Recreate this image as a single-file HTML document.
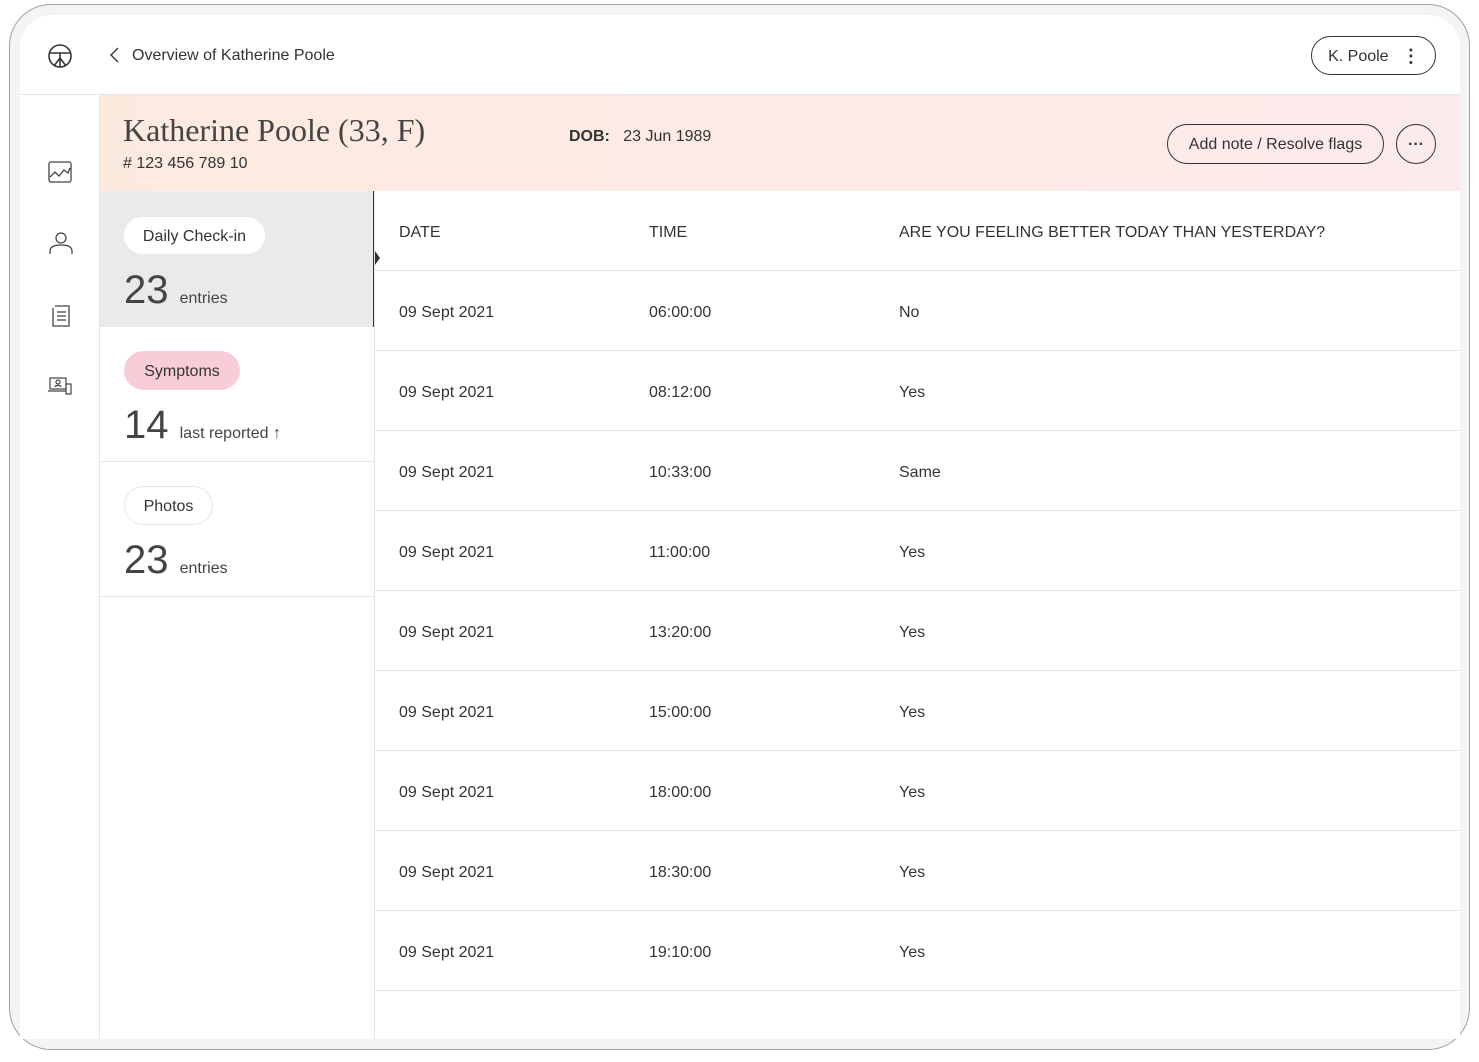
<!DOCTYPE html>
<html><head><style>
*{box-sizing:border-box;margin:0;padding:0}
body{width:1479px;height:1062px;background:#fff;font-family:"Liberation Sans",sans-serif;color:#333;position:relative;overflow:hidden}
.frame{position:absolute;left:9px;top:4px;width:1461px;height:1046px;border:1px solid #a0a0a0;border-radius:42px;background:#f4f4f4}
.screen{position:absolute;left:20px;top:15px;width:1440px;height:1024px;background:#fff;border-radius:32px 32px 0 0;overflow:hidden}
.abs{position:absolute}
.top{left:0;top:0;width:1440px;height:80px;border-bottom:1px solid #e6e6e6}
.side{left:0;top:80px;width:80px;height:944px;border-right:1px solid #e6e6e6}
.hdr{left:80px;top:80px;width:1360px;height:96px;background:linear-gradient(90deg,#fdeadf,#fcebeb)}
.pill{position:absolute;border-radius:20px;font-size:16px;display:flex;align-items:center;justify-content:center;padding-top:2px}
.row{position:absolute;left:355px;width:1085px;height:80px;border-bottom:1px solid #e6e6e6;font-size:16px}
.row span{position:absolute;top:33px}
.num{font-size:40px;color:#444}
</style></head><body>
<div class="frame"></div>
<div class="screen">
<div class="abs top">
 <svg class="abs" style="left:27px;top:28px" width="26" height="26" viewBox="0 0 26 26" fill="none" stroke="#333" stroke-width="1.6"><circle cx="13" cy="13" r="11"/><path d="M3 10h20M13 10v5M13 15l-6 8M13 15l6 8M13 15v9"/></svg>
 <svg class="abs" style="left:89px;top:31px" width="12" height="18" viewBox="0 0 12 18" fill="none" stroke="#333" stroke-width="1.4"><path d="M9 2L2 9l7 7"/></svg>
 <div class="abs" style="left:112px;top:32px;font-size:16px">Overview of Katherine Poole</div>
 <div class="pill" style="left:1291px;top:21px;width:125px;height:39px;border:1px solid #333">K. Poole&nbsp;&nbsp;&nbsp;<b style="font-size:18px;letter-spacing:-1px">⋮</b></div>
</div>
<div class="abs side">
 <svg class="abs" style="left:28px;top:66px" width="24" height="22" viewBox="0 0 24 22" fill="none" stroke="#444" stroke-width="1.3"><rect x="1" y="1" width="22" height="20" rx="2"/><path d="M2 16l5-5 4 4 5-6 4 3 2-5"/></svg>
 <svg class="abs" style="left:29px;top:136px" width="24" height="24" viewBox="0 0 24 24" fill="none" stroke="#444" stroke-width="1.3"><circle cx="12" cy="7" r="5"/><path d="M1 23v-3c0-4 4-6 11-6s11 2 11 6v3"/></svg>
 <svg class="abs" style="left:32px;top:210px" width="18" height="22" viewBox="0 0 18 22" fill="none" stroke="#444" stroke-width="1.3"><path d="M3 1h14v20H1V3"/><path d="M5 7h9M5 11h9M5 15h9"/></svg>
 <svg class="abs" style="left:28px;top:282px" width="24" height="18" viewBox="0 0 24 18" fill="none" stroke="#444" stroke-width="1.2"><rect x="2" y="1" width="16" height="11"/><path d="M0 14h18"/><circle cx="10" cy="5" r="2"/><path d="M7 10c0-2 6-2 6 0"/><rect x="18" y="7" width="5" height="10"/></svg>
</div>
<div class="abs hdr">
 <div class="abs" style="left:23px;top:17px;font-family:'Liberation Serif',serif;font-size:32px;color:#444">Katherine Poole (33, F)</div>
 <div class="abs" style="left:23px;top:60px;font-size:16px"># 123 456 789 10</div>
 <div class="abs" style="left:469px;top:33px;font-size:16px"><b>DOB:</b>&nbsp;&nbsp;&nbsp;23 Jun 1989</div>
 <div class="pill" style="left:1067px;top:29px;width:217px;height:40px;border:1px solid #333">Add note / Resolve flags</div>
 <div class="pill" style="left:1296px;top:29px;width:40px;height:40px;border:1px solid #333;font-weight:bold">···</div>
</div>
<div class="abs" style="left:80px;top:176px;width:275px;height:136px;background:#eaeaea"></div>
<div class="abs" style="left:353px;top:176px;width:2px;height:136px;background:#333"></div>
<svg class="abs" style="left:355px;top:236px" width="6" height="14"><path d="M0 0l5 7-5 7z" fill="#333"/></svg>
<div class="abs" style="left:354px;top:176px;width:1px;height:848px;background:#e6e6e6"></div>
<div class="pill" style="left:104px;top:202px;width:141px;height:37px;background:#fff">Daily Check-in</div>
<div class="abs num" style="left:104px;top:253px">23 <span style="font-size:16px">entries</span></div>
<div class="pill" style="left:104px;top:336px;width:116px;height:39px;background:#f9cdd7">Symptoms</div>
<div class="abs num" style="left:104px;top:388px">14 <span style="font-size:16px">last reported ↑</span></div>
<div class="abs" style="left:80px;top:446px;width:275px;height:1px;background:#e6e6e6"></div>
<div class="pill" style="left:104px;top:471px;width:89px;height:39px;border:1px solid #e6e6e6">Photos</div>
<div class="abs num" style="left:104px;top:523px">23 <span style="font-size:16px">entries</span></div>
<div class="abs" style="left:80px;top:581px;width:275px;height:1px;background:#e6e6e6"></div>
<div class="row" style="top:176px"><span style="left:24px">DATE</span><span style="left:274px">TIME</span><span style="left:524px">ARE YOU FEELING BETTER TODAY THAN YESTERDAY?</span></div>
<div class="row" style="top:256px"><span style="left:24px">09 Sept 2021</span><span style="left:274px">06:00:00</span><span style="left:524px">No</span></div>
<div class="row" style="top:336px"><span style="left:24px">09 Sept 2021</span><span style="left:274px">08:12:00</span><span style="left:524px">Yes</span></div>
<div class="row" style="top:416px"><span style="left:24px">09 Sept 2021</span><span style="left:274px">10:33:00</span><span style="left:524px">Same</span></div>
<div class="row" style="top:496px"><span style="left:24px">09 Sept 2021</span><span style="left:274px">11:00:00</span><span style="left:524px">Yes</span></div>
<div class="row" style="top:576px"><span style="left:24px">09 Sept 2021</span><span style="left:274px">13:20:00</span><span style="left:524px">Yes</span></div>
<div class="row" style="top:656px"><span style="left:24px">09 Sept 2021</span><span style="left:274px">15:00:00</span><span style="left:524px">Yes</span></div>
<div class="row" style="top:736px"><span style="left:24px">09 Sept 2021</span><span style="left:274px">18:00:00</span><span style="left:524px">Yes</span></div>
<div class="row" style="top:816px"><span style="left:24px">09 Sept 2021</span><span style="left:274px">18:30:00</span><span style="left:524px">Yes</span></div>
<div class="row" style="top:896px"><span style="left:24px">09 Sept 2021</span><span style="left:274px">19:10:00</span><span style="left:524px">Yes</span></div>
</div>
</body></html>
